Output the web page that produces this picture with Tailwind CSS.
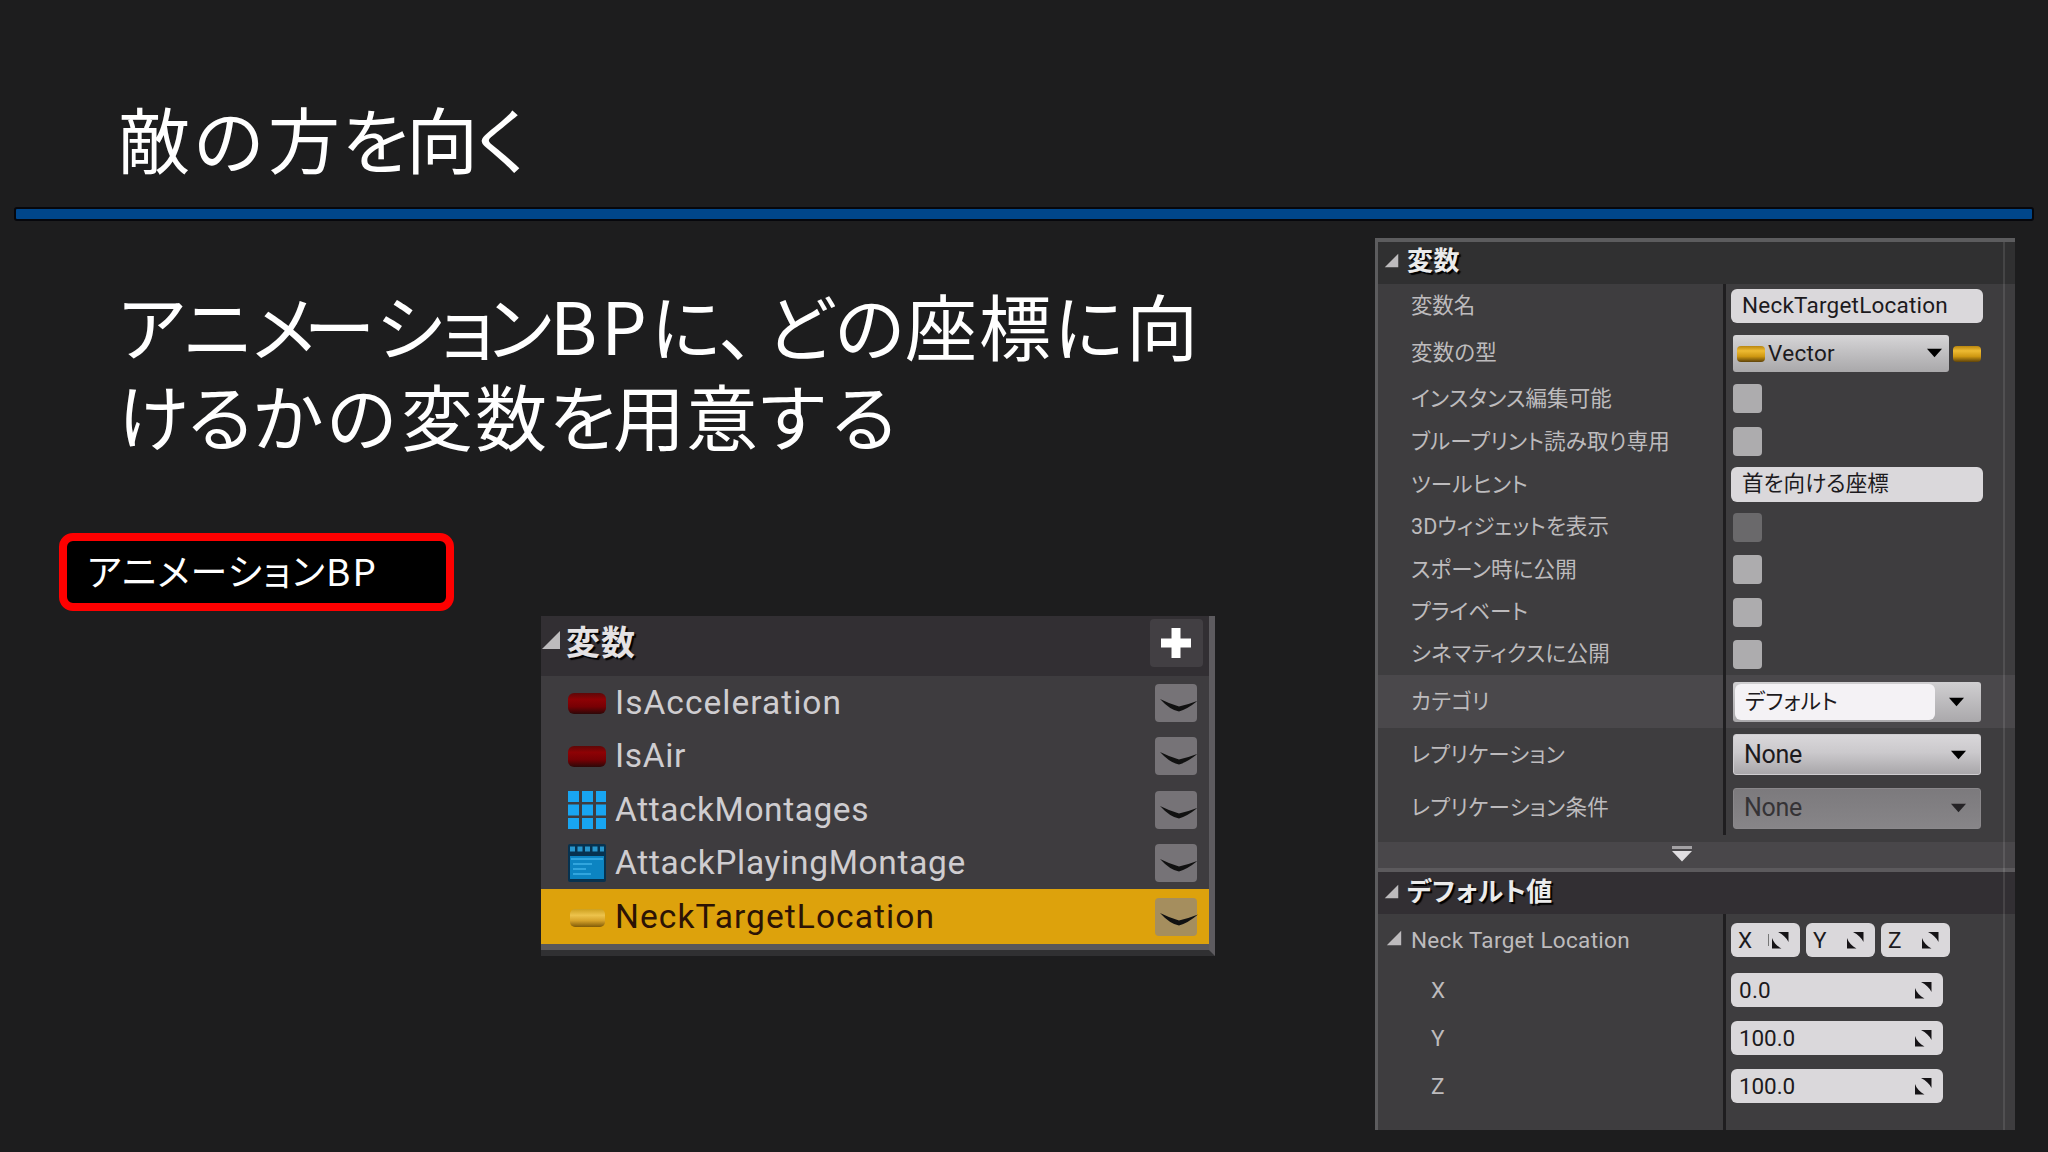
<!DOCTYPE html>
<html lang="ja">
<head>
<meta charset="utf-8">
<title>敵の方を向く</title>
<script src="https://cdn.jsdelivr.net/npm/@tailwindcss/browser@4"></script>
</head>
<body class="w-[2048px] h-[1152px] overflow-hidden bg-[#1d1d1e] font-['Roboto','Noto_Sans_CJK_JP',sans-serif]">
<svg class="absolute size-0">
  <defs>
    <linearGradient id="gr" x1="0" y1="0" x2="0" y2="1"><stop offset="0" stop-color="#5e0808"/><stop offset=".3" stop-color="#8e0205"/><stop offset=".65" stop-color="#780004"/><stop offset="1" stop-color="#2c0808"/></linearGradient>
    <linearGradient id="gy" x1="0" y1="0" x2="0" y2="1"><stop offset="0" stop-color="#b9860f"/><stop offset=".3" stop-color="#eebb33"/><stop offset=".65" stop-color="#cf9812"/><stop offset="1" stop-color="#5e430a"/></linearGradient>
    <linearGradient id="gl" x1="0" y1="0" x2="0" y2="1"><stop offset="0" stop-color="#cda01f"/><stop offset=".35" stop-color="#edc34c"/><stop offset=".65" stop-color="#d6a229"/><stop offset="1" stop-color="#805b08"/></linearGradient>
    <symbol id="tri" viewBox="0 0 20 20"><path d="M19 1V19H1Z" fill="#bdbbbd"/></symbol>
    <symbol id="down" viewBox="0 0 18 10"><path d="M1 0.5H17L9 9.5Z" fill="currentColor"/></symbol>
    <symbol id="spin" viewBox="0 0 18 18"><path d="M7 1H17.500V11C15.500 7 12 3.500 7 1ZM1 7C2.500 11.500 6 15 10.500 17.500H1Z" fill="#161417"/></symbol>
    <symbol id="eye" viewBox="0 0 42 38"><rect width="42" height="38" rx="4" fill="#767377"/><path d="M5 15Q15 20 24 22.500Q33 20.500 43 16.500Q33 25 24 27.500Q15 26 5 15Z" fill="#111"/></symbol>
  </defs>
</svg>
<main class="flex flex-col h-full">
  <header class="h-[207px] pt-[97px] pl-[118px]">
    <h1 class="flex h-20 items-center leading-[72px] text-[72px] text-white whitespace-nowrap font-['Noto_Sans_CJK_JP',sans-serif]"><span data-w="76">敵</span><span data-w="74">の</span><span data-w="74">方</span><span data-w="64">を</span><span data-w="71">向</span><span data-w="50">く</span></h1>
  </header>
  <div class="h-[14px] ml-[14px] w-[2020px] rounded-[3px] border-2 border-[#06070c] bg-[#00468a]"></div>

  <div class="flex">
    <section class="w-[1375px] shrink-0 pt-[58px]">
      <div class="flex flex-col pl-[118px] pb-[74px] leading-[72px] text-[72px] text-white whitespace-nowrap font-['Noto_Sans_CJK_JP',sans-serif]">
        <p class="flex h-[90px] items-center"><span data-w="66">ア</span><span data-w="68">ニ</span><span data-w="52">メ</span><span data-w="72">ー</span><span data-w="65">シ</span><span data-w="47">ョ</span><span data-w="62">ン</span><span data-w="101">BP</span><span data-w="68">に</span><span data-w="47">、</span><span data-w="69">ど</span><span data-w="70">の</span><span data-w="74">座</span><span data-w="75">標</span><span data-w="72">に</span><span data-w="72">向</span></p>
        <p class="flex h-[90px] items-center"><span data-w="70">け</span><span data-w="65">る</span><span data-w="74">か</span><span data-w="74">の</span><span data-w="74">変</span><span data-w="74">数</span><span data-w="64">を</span><span data-w="73">用</span><span data-w="74">意</span><span data-w="72">す</span><span data-w="60">る</span></p>
      </div>
      <div class="ml-[59px] flex h-[78px] w-[395px] items-center rounded-[14px] border-8 border-[#fe0000] bg-black pl-5 text-[37px] leading-[60px] text-white whitespace-nowrap font-['Noto_Sans_CJK_JP',sans-serif]"><span data-w="239" class="pb-1">アニメーション</span><span data-w="52" class="pb-1">BP</span></div>

      <div class="ml-[541px] mt-[5px] h-[340px] w-[674px] border-r-[6px] border-b-[6px] border-r-[#5d5b5f] border-b-[#303032] bg-[#3e3c3f]">
        <div class="flex h-[60px] items-center bg-[#322f33]">
          <svg class="size-5 mb-3"><use href="#tri"/></svg>
          <h2 class="ml-[5px] mb-1.5 text-[34px] font-bold leading-10 text-[#e4e2e4] text-shadow-[2px_2px_1px_#000]"><span data-w="70">変数</span></h2>
          <div class="ml-auto mr-1.5 mb-1.5 flex h-12 w-[53px] items-center justify-center rounded bg-[#423f43]"><svg class="size-8" viewBox="0 0 32 32"><path d="M15 1V31M0 16H30" stroke="#fff" stroke-width="9"/></svg></div>
        </div>
        <ul class="text-[33.5px] leading-10 text-[#cfcdd0]">
          <li class="flex h-[53px] items-center pl-[27px] pr-3"><svg class="h-[22px] w-[38px]"><rect y="1" width="38" height="21" rx="6" fill="url(#gr)"/></svg><span class="ml-[9px]" data-w="227">IsAcceleration</span><svg class="ml-auto h-[38px] w-[42px] overflow-visible"><use href="#eye"/></svg></li>
          <li class="flex h-[54px] items-center pl-[27px] pr-3"><svg class="h-[22px] w-[38px]"><rect y="1" width="38" height="21" rx="6" fill="url(#gr)"/></svg><span class="ml-[9px]" data-w="71">IsAir</span><svg class="ml-auto h-[38px] w-[42px] overflow-visible"><use href="#eye"/></svg></li>
          <li class="flex h-[53px] items-center pl-[27px] pr-3"><svg class="size-[38px]" viewBox="0 0 38 38"><path d="M0 0H11V11H0ZM14 0H25V11H14ZM28 0H38V11H28ZM0 13.500H11V24.500H0ZM14 13.500H25V24.500H14ZM28 13.500H38V24.500H28ZM0 27H11V38H0ZM14 27H25V38H14ZM28 27H38V38H28Z" fill="#18a5f1"/></svg><span class="ml-[9px]" data-w="254">AttackMontages</span><svg class="ml-auto h-[38px] w-[42px] overflow-visible"><use href="#eye"/></svg></li>
          <li class="flex h-[53px] items-center pl-[27px] pr-3"><svg class="size-[38px]" viewBox="0 0 38 38"><rect width="38" height="38" rx="2" fill="#07324f"/><path d="M2 5H36" stroke="#2896cc" stroke-width="5" stroke-dasharray="5 2.500"/><rect x="2" y="12" width="34" height="23" fill="#0c84c2"/><path d="M3 15H35M5 20H24M5 25H18M5 30H23" stroke="#3cb0e8" stroke-width="1.500"/></svg><span class="ml-[9px]" data-w="351">AttackPlayingMontage</span><svg class="ml-auto h-[38px] w-[42px] overflow-visible"><use href="#eye"/></svg></li>
          <li class="flex h-[55px] items-center bg-[#dda20c] pl-[27px] pr-3 text-[#2c1305]"><svg class="h-[22px] w-[38px]"><rect x="2" y="3" width="35" height="18" rx="5" fill="url(#gl)"/></svg><span class="ml-[9px]" data-w="320">NeckTargetLocation</span><svg class="ml-auto h-[38px] w-[42px] overflow-visible" viewBox="0 0 42 38"><rect width="42" height="38" rx="4" fill="#a58e5e"/><path d="M5 15Q15 20 24 22.500Q33 20.500 43 16.500Q33 25 24 27.500Q15 26 5 15Z" fill="#111"/></svg></li>
          <li class="h-[6px] bg-[#59575a]"></li>
        </ul>
      </div>
    </section>

    <aside class="relative mt-[17px] flex h-[892px] w-[640px] flex-col border-l-[3px] border-t-4 border-[#5c5c5e] bg-[#3e3d3f] text-[21.5px] leading-7 text-[#bdbbbd]">
      <div class="flex h-[42px] items-center bg-[#303031] pl-1.5"><svg class="mb-1.5 size-[15px]"><use href="#tri"/></svg><h2 class="ml-2 mb-1 text-[26px] font-bold leading-8 text-[#ebebeb] text-shadow-[2px_2px_1px_#000]"><span data-w="53">変数</span></h2></div>

      <div class="flex h-[43px] items-center"><span class="w-[345px] pl-[33px]"><span data-w="64">変数名</span></span><span class="flex h-full items-center border-l-[3px] border-[#1f1e20] pl-[5px]"><span class="flex h-[34px] w-[252px] items-center rounded-md bg-[#dad8db] pl-[11px] pb-0.5 text-[22.5px] text-[#1c1a1d]"><span data-w="206">NeckTargetLocation</span></span></span></div>
      <div class="flex h-[50px] items-center"><span class="w-[345px] pl-[33px] pt-px"><span data-w="86">変数の型</span></span><span class="flex h-full items-center border-l-[3px] border-[#1f1e20] pl-[7px] pt-[3px]"><span class="flex h-[37px] w-[216px] items-center rounded-[3px] bg-linear-to-b from-[#d6d5d7] to-[#a9a8aa] pl-1 pb-0.5 text-[22.5px] text-[#1c1a1d]"><svg class="h-4 w-7 mt-[3px]"><rect width="28" height="16" rx="4" fill="url(#gy)"/></svg><span class="ml-[3px]" data-w="67">Vector</span><svg class="ml-auto mr-1.5 h-[10px] w-[17px] text-black"><use href="#down"/></svg></span><svg class="ml-1 h-4 w-7"><rect width="28" height="16" rx="4" fill="url(#gy)"/></svg></span></div>
      <div class="flex h-[43px] items-center"><span class="w-[345px] pl-[33px]"><span data-w="201">インスタンス編集可能</span></span><span class="flex h-full items-center border-l-[3px] border-[#1f1e20] pl-[7px]"><span class="size-[29px] rounded bg-[#adacae]"></span></span></div>
      <div class="flex h-[43px] items-center"><span class="w-[345px] pl-[33px]"><span data-w="259">ブループリント読み取り専用</span></span><span class="flex h-full items-center border-l-[3px] border-[#1f1e20] pl-[7px]"><span class="size-[29px] rounded bg-[#adacae]"></span></span></div>
      <div class="flex h-[43px] items-center"><span class="w-[345px] pl-[33px]"><span data-w="117">ツールヒント</span></span><span class="flex h-full items-center border-l-[3px] border-[#1f1e20] pl-[5px]"><span class="flex h-[35px] w-[252px] items-center rounded-md bg-[#dad8db] pl-[11px] pb-0.5 text-[#1c1a1d]"><span data-w="147">首を向ける座標</span></span></span></div>
      <div class="flex h-[42px] items-center"><span class="w-[345px] pl-[33px]"><span data-w="198">3Dウィジェットを表示</span></span><span class="flex h-full items-center border-l-[3px] border-[#1f1e20] pl-[7px]"><span class="size-[29px] rounded bg-[#6a696b]"></span></span></div>
      <div class="flex h-[43px] items-center"><span class="w-[345px] pl-[33px]"><span data-w="166">スポーン時に公開</span></span><span class="flex h-full items-center border-l-[3px] border-[#1f1e20] pl-[7px]"><span class="size-[29px] rounded bg-[#adacae]"></span></span></div>
      <div class="flex h-[42px] items-center"><span class="w-[345px] pl-[33px]"><span data-w="117">プライベート</span></span><span class="flex h-full items-center border-l-[3px] border-[#1f1e20] pl-[7px]"><span class="size-[29px] rounded bg-[#adacae]"></span></span></div>
      <div class="flex h-[42px] items-center"><span class="w-[345px] pl-[33px]"><span data-w="199">シネマティクスに公開</span></span><span class="flex h-full items-center border-l-[3px] border-[#1f1e20] pl-[7px]"><span class="size-[29px] rounded bg-[#adacae]"></span></span></div>
      <div class="flex h-[53px] items-center bg-[#4a484b]"><span class="w-[345px] pl-[33px]"><span data-w="79">カテゴリ</span></span><span class="flex h-full items-center border-l-[3px] border-[#1f1e20] pl-[7px]"><span class="flex h-10 w-[248px] items-center rounded-[3px] bg-linear-to-b from-[#d0cfd1] to-[#aaa8ab] py-0.5 pl-0.5 text-[#1c1a1d]"><span class="flex h-full w-[200px] items-center rounded-md bg-[#f4f2f5] pl-[10px]"><span data-w="93">デフォルト</span></span><svg class="ml-[13px] h-[10px] w-[17px] text-black"><use href="#down"/></svg></span></span></div>
      <div class="flex h-[53px] items-center"><span class="w-[345px] pl-[33px]"><span data-w="154">レプリケーション</span></span><span class="flex h-full items-center border-l-[3px] border-[#1f1e20] pl-[7px]"><span class="flex h-[41px] w-[248px] items-center rounded-[3px] border border-[#cfcdd0] bg-linear-to-b from-[#d9d7da] via-[#cbc9cc] via-45% to-[#a9a7aa] pl-[10px] pr-[13px] text-[25px] text-[#1c1a1d]"><span data-w="58">None</span><svg class="ml-auto h-[10px] w-[17px] text-black"><use href="#down"/></svg></span></span></div>
      <div class="flex h-[54px] items-center"><span class="w-[345px] pl-[33px]"><span data-w="198">レプリケーション条件</span></span><span class="flex h-full items-center border-l-[3px] border-[#1f1e20] pl-[7px]"><span class="flex h-[41px] w-[248px] items-center rounded-[3px] border border-[#8a888b] bg-linear-to-b from-[#7c7a7d] to-[#878588] pl-[10px] pr-[13px] text-[25px] text-[#353336]"><span data-w="58">None</span><svg class="ml-auto h-[10px] w-[17px] text-[#252326]"><use href="#down"/></svg></span></span></div>

      <div class="mt-[7px] flex h-[26px] justify-center bg-[#49474a] pt-1"><svg class="h-4 w-[22px] ml-[-30px]" viewBox="0 0 22 16"><path d="M1 0H21V3H1Z" fill="#a3a1a4"/><path d="M1 5H21L11 15.500Z" fill="#e0dee1"/></svg></div>

      <div class="flex h-[46px] items-center border-t-4 border-[#5c5a5d] bg-[#322f33] pl-1.5"><svg class="mb-1 size-[15px]"><use href="#tri"/></svg><h2 class="ml-2 mb-0.5 text-[26px] font-bold leading-8 text-[#ebebeb] text-shadow-[2px_2px_1px_#000]"><span data-w="146">デフォルト値</span></h2></div>
      <div class="flex h-[52px] items-center"><span class="flex w-[345px] items-center pl-2 text-[22.5px]"><svg class="mb-1 mr-[9px] size-4"><use href="#tri"/></svg><span data-w="219">Neck Target Location</span></span>
        <span class="flex h-full items-center gap-[6px] border-l-[3px] border-[#1f1e20] pl-[5px] text-[22.5px] text-[#1c1a1d]">
          <span class="flex h-[34px] w-[69px] items-center rounded-md bg-[#dad8db] pl-[7px] pr-[11px]"><span>X</span><span class="ml-auto mr-0.5 h-3 w-px bg-[#777]"></span><svg class="size-[18px]"><use href="#spin"/></svg></span>
          <span class="flex h-[34px] w-[69px] items-center justify-between rounded-md bg-[#dad8db] pl-[7px] pr-[11px]"><span>Y</span><svg class="size-[18px]"><use href="#spin"/></svg></span>
          <span class="flex h-[34px] w-[69px] items-center justify-between rounded-md bg-[#dad8db] pl-[7px] pr-[11px]"><span>Z</span><svg class="size-[18px]"><use href="#spin"/></svg></span>
        </span></div>
      <div class="flex h-12 items-center text-[22.5px]"><span class="w-[345px] pl-[53px]">X</span><span class="flex h-full items-center border-l-[3px] border-[#1f1e20] pl-[5px]"><span class="flex h-[34px] w-[212px] items-center justify-between rounded-md bg-[#dad8db] pl-2 pr-[11px] text-[#1c1a1d]"><span data-w="32">0.0</span><svg class="size-[18px]"><use href="#spin"/></svg></span></span></div>
      <div class="flex h-12 items-center text-[22.5px]"><span class="w-[345px] pl-[53px]">Y</span><span class="flex h-full items-center border-l-[3px] border-[#1f1e20] pl-[5px]"><span class="flex h-[34px] w-[212px] items-center justify-between rounded-md bg-[#dad8db] pl-2 pr-[11px] text-[#1c1a1d]"><span data-w="56">100.0</span><svg class="size-[18px]"><use href="#spin"/></svg></span></span></div>
      <div class="flex h-12 items-center text-[22.5px]"><span class="w-[345px] pl-[53px]">Z</span><span class="flex h-full items-center border-l-[3px] border-[#1f1e20] pl-[5px]"><span class="flex h-[34px] w-[212px] items-center justify-between rounded-md bg-[#dad8db] pl-2 pr-[11px] text-[#1c1a1d]"><span data-w="56">100.0</span><svg class="size-[18px]"><use href="#spin"/></svg></span></span></div>
      <div class="grow pl-[345px]"><div class="h-full border-l-[3px] border-[#1f1e20]"></div></div>
      <div class="absolute right-[10px] top-0 h-full w-[2px] bg-white/10"></div>
    </aside>
  </div>
</main>
<script>
  // Track each label so that its advance equals data-w pixels.
  function track() {
    document.querySelectorAll('[data-w]').forEach(function (el) {
      el.style.whiteSpace = 'nowrap';
      el.style.fontFeatureSettings = '"palt"';
      el.style.letterSpacing = '0px';
      var gap = (Number(el.dataset.w) - el.getBoundingClientRect().width) / el.textContent.length;
      el.style.letterSpacing = gap + 'px';
    });
  }
  track();
  window.addEventListener('load', track);
</script>
</body>
</html>
